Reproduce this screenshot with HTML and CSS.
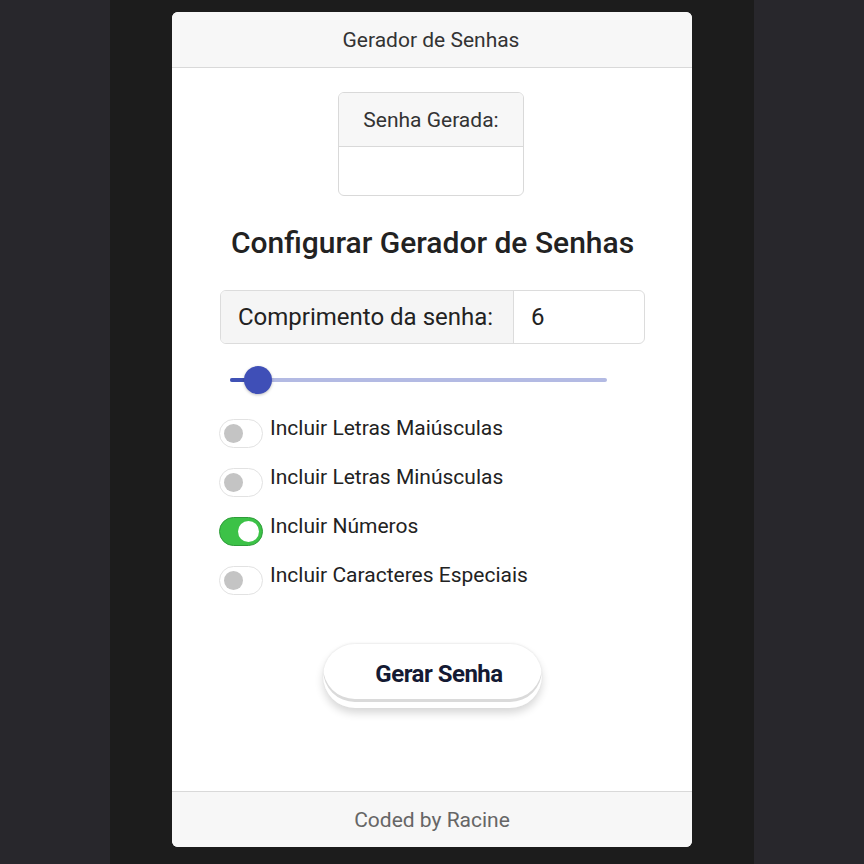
FILE: index.html
```html
<!DOCTYPE html>
<html lang="pt">
<head>
<meta charset="utf-8">
<title>Gerador de Senhas</title>
<link rel="stylesheet" href="styles.css">
</head>
<body>
<div class="column">
  <div class="card">
    <div class="card-header">Gerador de Senhas</div>
    <div class="card-body">
      <div class="result">
        <div class="result-head">Senha Gerada:</div>
        <div class="result-body"></div>
      </div>
      <h2 class="title">Configurar Gerador de Senhas</h2>
      <div class="input-group">
        <div class="input-label">Comprimento da senha:</div>
        <div class="input-value">6</div>
      </div>
      <div class="slider">
        <div class="track"><div class="fill"></div></div>
        <div class="thumb"></div>
      </div>
      <div class="options">
        <div class="option"><span class="switch"><span class="knob"></span></span><span class="opt-label">Incluir Letras Maiúsculas</span></div>
        <div class="option"><span class="switch"><span class="knob"></span></span><span class="opt-label">Incluir Letras Minúsculas</span></div>
        <div class="option"><span class="switch on"><span class="knob"></span></span><span class="opt-label">Incluir Números</span></div>
        <div class="option"><span class="switch"><span class="knob"></span></span><span class="opt-label">Incluir Caracteres Especiais</span></div>
      </div>
      <div class="btn-row"><button class="btn">Gerar Senha</button></div>
    </div>
    <div class="card-footer">Coded by Racine</div>
  </div>
</div>
</body>
</html>
```

FILE: styles.css
```css
* { box-sizing: border-box; }
html, body { margin: 0; padding: 0; }
body {
  background: #28272c;
  font-family: Roboto, "Noto Sans", sans-serif;
  color: #212529;
  height: 864px;
  overflow: hidden;
}
.column {
  width: 644px;
  margin: 0 auto;
  height: 864px;
  background: #1c1c1c;
  padding-top: 12px;
}
.card {
  width: 520px;
  margin: 0 auto;
  background: #fff;
  border-radius: 6px;
  overflow: hidden;
  height: 835px;
  display: flex;
  flex-direction: column;
}
.card-header {
  height: 56px;
  background: #f7f7f7;
  border-bottom: 1px solid #d9d9d9;
  display: flex;
  align-items: center;
  justify-content: center;
  font-size: 21px;
  color: #333;
  padding-right: 2px;
}
.card-body {
  flex: 1;
  padding: 24px 47px 0 48px;
}
.result {
  width: 186px;
  margin-left: 118px;
  border: 1px solid #d9d9d9;
  border-radius: 6px;
  overflow: hidden;
}
.result-head {
  height: 54px;
  background: #f7f7f7;
  border-bottom: 1px solid #d9d9d9;
  display: flex;
  align-items: center;
  justify-content: center;
  font-size: 21px;
  color: #333;
}
.result-body { height: 48px; }
.title {
  margin: 31px 0 0;
  text-align: center;
  font-size: 30px;
  line-height: 32px;
  font-weight: 500;
  color: #222;
}
.input-group {
  margin-top: 31px;
  height: 54px;
  display: flex;
  border: 1px solid #dcdcdc;
  border-radius: 6px;
  overflow: hidden;
  font-size: 24px;
  color: #222;
}
.input-label {
  width: 293px;
  background: #f5f5f5;
  border-right: 1px solid #dcdcdc;
  display: flex;
  align-items: center;
  padding-left: 17px;
}
.input-value {
  flex: 1;
  display: flex;
  align-items: center;
  padding-left: 17px;
}
.slider {
  position: relative;
  height: 30px;
  margin: 21px 0 0 10px;
  width: 377px;
}
.track {
  position: absolute;
  left: 0;
  right: 0;
  top: 13px;
  height: 4px;
  border-radius: 2px;
  background: #b3bae3;
}
.fill {
  width: 28px;
  height: 4px;
  border-radius: 2px;
  background: #3f51b5;
}
.thumb {
  position: absolute;
  left: 14px;
  top: 1px;
  width: 28px;
  height: 28px;
  border-radius: 50%;
  background: #3f4fb7;
  box-shadow: 0 1px 3px rgba(0,0,0,0.25);
}
.options { margin-top: 21px; margin-left: -1px; }
.option {
  display: flex;
  align-items: flex-start;
  gap: 7px;
  height: 49px;
}
.switch {
  position: relative;
  width: 44px;
  height: 29px;
  margin-top: 3px;
  border-radius: 15px;
  border: 1px solid #e2e2e2;
  background: #fff;
  flex: none;
}
.switch .knob {
  position: absolute;
  left: 4px;
  top: 4px;
  width: 19px;
  height: 19px;
  border-radius: 50%;
  background: #c4c4c4;
}
.switch.on {
  background: #3cc247;
  border-color: #2f9c3a;
}
.switch.on .knob {
  left: 18px;
  top: 3px;
  width: 21px;
  height: 21px;
  background: #fff;
}
.opt-label {
  font-size: 21px;
  line-height: 24px;
  color: #222;
}
.btn-row {
  display: flex;
  justify-content: center;
  margin-top: 32px;
  padding-right: 1px;
}
.btn {
  width: 219px;
  height: 64px;
  border: none;
  border-radius: 32px;
  background: #fff;
  font-family: Roboto, "Noto Sans", sans-serif;
  font-size: 24px;
  font-weight: 700;
  color: #141a33;
  padding: 0 0 4px 14px;
  letter-spacing: -0.5px;
  box-shadow: 0 -1px 2px rgba(0,0,0,0.06), 0 -6px 0 #fff inset, 0 -9px 0 #dadada inset, 0 5px 8px rgba(0,0,0,0.16);
}
.card-footer {
  height: 56px;
  background: #f7f7f7;
  border-top: 1px solid #d9d9d9;
  display: flex;
  align-items: center;
  justify-content: center;
  font-size: 21px;
  color: #666;
}
```
